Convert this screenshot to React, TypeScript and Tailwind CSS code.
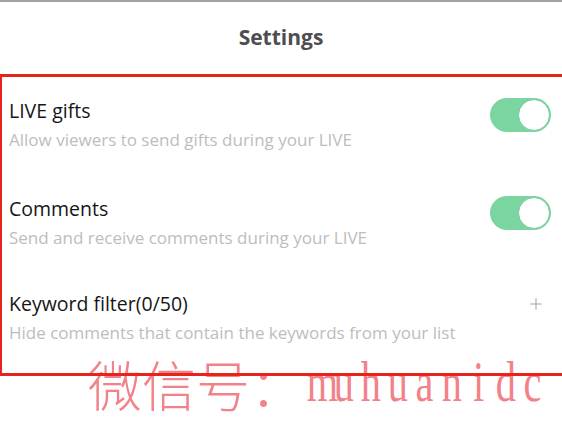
import { Plus } from 'lucide-react';

const rows = [
  { title: 'LIVE gifts', desc: 'Allow viewers to send gifts during your LIVE', kind: 'toggle', h: 'h-[98px]' },
  { title: 'Comments', desc: 'Send and receive comments during your LIVE', kind: 'toggle', h: 'h-[95px]' },
  { title: 'Keyword filter(0/50)', desc: 'Hide comments that contain the keywords from your list', kind: 'plus', h: 'h-[82px]' },
];

function Toggle() {
  return (
    <div className="w-[61px] h-[34px] rounded-full bg-[#7bd5a1] flex items-center justify-end p-[1px]">
      <div className="w-[32px] h-[32px] rounded-full bg-white border border-[#6fcb96]"></div>
    </div>
  );
}

export default function App() {
  return (
    <div className="relative w-[562px] h-[422px] overflow-hidden bg-white border-t-2 border-[#a3a3a3] font-['Open_Sans','Noto_Sans',sans-serif]">
      {/* watermark, sits under the red frame */}
      <div className="absolute left-[88px] top-[352px] flex items-end text-[#f2828a] leading-none whitespace-nowrap">
        <span className="text-[54px] font-light font-['Noto_Sans_CJK_SC',sans-serif]">微信号：</span>
        <span className="flex -ml-[1px] mb-[1px] font-['Liberation_Serif',serif] text-[56px]">
          {'muhuanidc'.split('').map((c, i) => (
            <span key={i} className="inline-block w-[27px] text-center scale-x-[0.72]">
              {c}
            </span>
          ))}
        </span>
      </div>

      <header className="h-[72px] flex items-center justify-center">
        <h1 className="text-[21px] font-bold text-[#4d4d52]">Settings</h1>
      </header>

      <section className="relative w-[565px] border-l-2 border-y-[3px] border-[#e8231d] pt-[21px]">
        {rows.map((r) => (
          <div key={r.title} className={`${r.h} flex items-start justify-between pl-[7px] pr-[14px]`}>
            <div className="flex flex-col gap-[5px]">
              <div className="text-[19.5px] leading-[26px] text-[#161616]">{r.title}</div>
              <div className="text-[17px] leading-[21px] text-[#bdbdbd]">{r.desc}</div>
            </div>
            {r.kind === 'toggle' ? (
              <Toggle />
            ) : (
              <Plus className="w-[18px] h-[18px] mt-[4px] mr-[6px] text-[#9d9d9d]" strokeWidth={1.3} />
            )}
          </div>
        ))}
      </section>
    </div>
  );
}
